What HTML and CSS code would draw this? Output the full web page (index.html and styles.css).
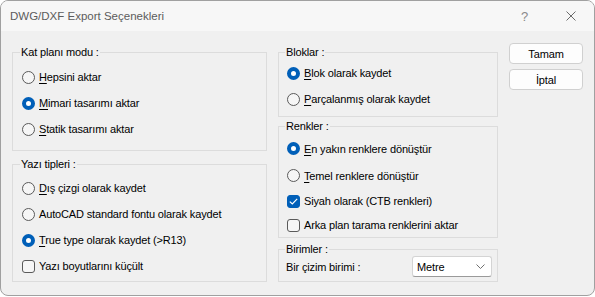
FILE: index.html
```html
<!DOCTYPE html>
<html lang="tr">
<head>
    <meta charset="UTF-8" />
    <meta name="viewport" content="width=device-width, initial-scale=1.0"/>
    <title>DWG/DXF Export Seçenekleri</title>
    <link rel="stylesheet" href="styles.css">
</head>
<body>
    <div class="window">
        <div class="titlebar">
            <span class="title">DWG/DXF Export Seçenekleri</span>
            <span class="help">?</span>
            <span class="close">
                <svg width="10" height="10" viewBox="0 0 10 10"><path d="M0.5 0.5 L9.5 9.5 M9.5 0.5 L0.5 9.5" stroke="#6b6b6b" stroke-width="1" fill="none"/></svg>
            </span>
        </div>

        <div class="content">
            <!-- Left column -->
            <div class="col col-left">
                <fieldset class="group group-plan">
                    <legend>Kat planı modu :</legend>
                    <div class="option"><span class="radio"></span><span><u>H</u>epsini aktar</span></div>
                    <div class="option"><span class="radio checked"></span><span><u>M</u>imari tasarımı aktar</span></div>
                    <div class="option"><span class="radio"></span><span><u>S</u>tatik tasarımı aktar</span></div>
                </fieldset>

                <fieldset class="group group-fonts">
                    <legend>Yazı tipleri :</legend>
                    <div class="option"><span class="radio"></span><span><u>D</u>ış çizgi olarak kaydet</span></div>
                    <div class="option"><span class="radio"></span><span>AutoCAD standard fontu olarak kaydet</span></div>
                    <div class="option"><span class="radio checked"></span><span><u>T</u>rue type olarak kaydet (&gt;R13)</span></div>
                    <div class="option"><span class="check"></span><span>Yazı boyutlarını küçült</span></div>
                </fieldset>
            </div>

            <!-- Right column -->
            <div class="col col-right">
                <fieldset class="group group-blocks">
                    <legend>Bloklar :</legend>
                    <div class="option"><span class="radio checked"></span><span><u>B</u>lok olarak kaydet</span></div>
                    <div class="option"><span class="radio"></span><span><u>P</u>arçalanmış olarak kaydet</span></div>
                </fieldset>

                <fieldset class="group group-colors">
                    <legend>Renkler :</legend>
                    <div class="option tall"><span class="radio checked"></span><span><u>E</u>n yakın renklere dönüştür</span></div>
                    <div class="option tall"><span class="radio"></span><span><u>T</u>emel renklere dönüştür</span></div>
                    <div class="option short"><span class="check checked">
                        <svg width="9" height="7" viewBox="0 0 9 7"><path d="M0.8 3.6 L3.3 6 L8.2 0.9" stroke="#fff" stroke-width="1.2" fill="none"/></svg>
                    </span><span>Siyah olarak (CTB renkleri)</span></div>
                    <div class="option short"><span class="check"></span><span>Arka plan tarama renklerini aktar</span></div>
                </fieldset>

                <fieldset class="group group-units">
                    <legend>Birimler :</legend>
                    <div class="unit-row">
                        <span class="unit-label">Bir çizim birimi :</span>
                        <div class="select">
                            <span>Metre</span>
                            <svg width="9" height="5" viewBox="0 0 9 5"><path d="M0.5 0.5 L4.5 4.5 L8.5 0.5" stroke="#707070" stroke-width="1" fill="none"/></svg>
                        </div>
                    </div>
                </fieldset>
            </div>

            <!-- Buttons -->
            <div class="buttons">
                <button class="btn">Tamam</button>
                <button class="btn">İptal</button>
            </div>
        </div>
    </div>
</body>
</html>
```

FILE: styles.css
```css
/* Basic Styles */
body {
    margin: 0;
    background: #fff;
    font-family: 'Liberation Sans', Arial, sans-serif;
    font-size: 11px;
    letter-spacing: -0.15px;
    color: #000;
}

.window {
    width: 595px;
    height: 296px;
    box-sizing: border-box;
    border: 1px solid #a0a0a0;
    border-radius: 8px;
    background: #f0f0f0;
    overflow: hidden;
}

.titlebar {
    height: 30px;
    background: #f7f7f7;
    display: flex;
    align-items: center;
    padding-left: 9px;
}

.titlebar .title {
    flex: 1;
    color: #5c5c5c;
    font-size: 11.5px;
    letter-spacing: 0;
}

.titlebar .help {
    color: #8a8a8a;
    font-size: 13px;
    width: 16px;
    margin-right: 29px;
}

.titlebar .close {
    display: flex;
    margin-right: 18px;
}

.content {
    display: flex;
    align-items: flex-start;
    padding: 12px 0 0 11px;
}

.col {
    display: flex;
    flex-direction: column;
    padding-top: 2px;
}

.col-left {
    width: 255px;
}

.col-left .group {
    padding-left: 9px;
}

.col-right {
    width: 220px;
    margin-left: 11px;
}

/* Group boxes */
.group {
    margin: 0;
    border: 1px solid #dcdcdc;
    padding: 0 0 0 8px;
    min-width: 0;
}

.group legend {
    line-height: 14px;
    padding: 0 1px;
    margin-left: -2px;
}

.group-plan {
    padding-top: 5px;
    padding-bottom: 8px;
}

.group-fonts {
    margin-top: 6px;
    padding-top: 4px;
    padding-bottom: 2px;
}

.group-blocks {
    padding-top: 1px;
    padding-bottom: 4px;
}

.group-colors {
    margin-top: 2px;
    padding-top: 2px;
}

.group-units {
    margin-top: 4px;
    padding-right: 5px;
    padding-bottom: 4px;
}

.option {
    height: 26px;
    display: flex;
    align-items: center;
    gap: 4px;
    white-space: nowrap;
}

.option.tall {
    height: 27px;
}

.option.short {
    height: 24px;
}

.option u {
    text-underline-offset: 2px;
}

/* Radios and checkboxes */
.radio {
    width: 13px;
    height: 13px;
    box-sizing: border-box;
    border: 1px solid #5a5a5a;
    border-radius: 50%;
    background: #f6f6f6;
    flex: none;
}

.radio.checked {
    border: 4px solid #005fb8;
    background: #fff;
}

.check {
    width: 13px;
    height: 13px;
    box-sizing: border-box;
    border: 1px solid #5a5a5a;
    border-radius: 3px;
    background: #f6f6f6;
    flex: none;
    display: flex;
    align-items: center;
    justify-content: center;
}

.check.checked {
    border-color: #005fb8;
    background: #005fb8;
}

/* Units row */
.unit-row {
    height: 21px;
    display: flex;
    align-items: center;
    justify-content: space-between;
}

.unit-label {
    margin-left: -1px;
}

.select {
    width: 80px;
    height: 21px;
    box-sizing: border-box;
    border: 1px solid #d4d4d4;
    border-bottom-color: #9a9a9a;
    border-radius: 3px;
    background: #fff;
    display: flex;
    align-items: center;
    justify-content: space-between;
    padding: 0 6px 0 4px;
}

/* Buttons */
.buttons {
    display: flex;
    flex-direction: column;
    gap: 5px;
    margin-left: 11px;
}

.btn {
    width: 74px;
    height: 21px;
    box-sizing: border-box;
    border: 1px solid #d0d0d0;
    border-radius: 4px;
    background: #fdfdfd;
    font-family: inherit;
    font-size: 11px;
    letter-spacing: -0.15px;
    color: #000;
    padding: 0;
}
```
